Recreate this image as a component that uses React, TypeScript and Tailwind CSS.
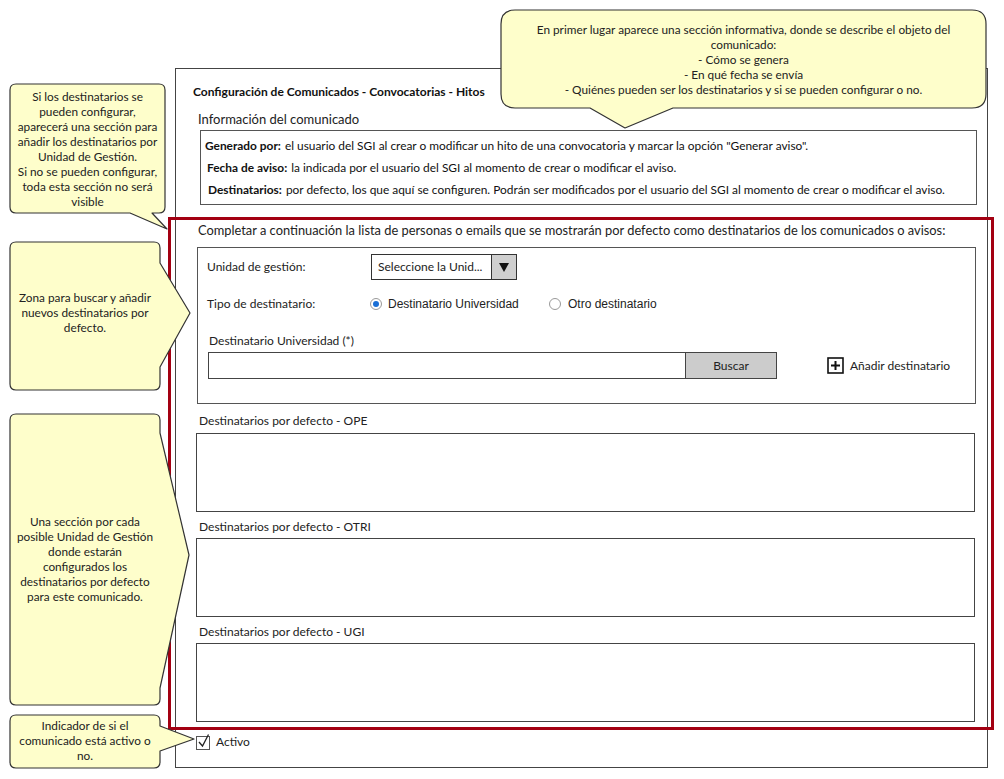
import React from 'react';

const FONT = { fontFamily: 'Lato, "Open Sans", sans-serif' };
const ARIAL = { fontFamily: '"Liberation Sans", Arial, sans-serif' };

function CalloutShapes() {
  return (
    <svg className="absolute inset-0 pointer-events-none" width="1004" height="779" viewBox="0 0 1004 779">
      <g fill="#fefecb" stroke="#333" strokeWidth="1.2" strokeLinejoin="round">
        <path d="M515,10 H972 Q986,10 986,24 V94 Q986,108 972,108 H673 L625,128 L590,108 H515 Q501,108 501,94 V24 Q501,10 515,10 Z" />
        <path d="M16,84 H159 Q165,84 165,90 V207 Q165,213 159,213 H152 L167,229 L130,213 H16 Q10,213 10,207 V90 Q10,84 16,84 Z" />
        <path d="M16,242 H154 Q160,242 160,248 V263 L190,313 L160,367 V384 Q160,390 154,390 H16 Q10,390 10,384 V248 Q10,242 16,242 Z" />
        <path d="M16,414 H154 Q160,414 160,420 V433 L189,555 L160,688 V699 Q160,705 154,705 H16 Q10,705 10,699 V420 Q10,414 16,414 Z" />
        <path d="M16,715 H154 Q160,715 160,721 V726 L194,739 L160,751 V762 Q160,768 154,768 H16 Q10,768 10,762 V721 Q10,715 16,715 Z" />
      </g>
    </svg>
  );
}

function CalloutText({ lines, className }: { lines: string[]; className: string }) {
  return (
    <div className={`absolute flex flex-col items-center text-[11.8px] leading-[15px] text-[#222] ${className}`} style={FONT}>
      {lines.map((l, i) => (
        <div key={i} className="whitespace-nowrap">{l}</div>
      ))}
    </div>
  );
}

function InfoRow({ label, value, pl }: { label: string; value: string; pl: string }) {
  return (
    <div className={`flex h-[22px] items-center whitespace-nowrap text-[11.9px] text-[#111] ${pl}`}>
      <span className="font-bold">{label}</span>
      <span className="ml-[4px]">{value}</span>
    </div>
  );
}

function Radio({ checked }: { checked?: boolean }) {
  return (
    <span className="flex h-[12px] w-[12px] items-center justify-center rounded-full border border-[#999] bg-white">
      {checked && <span className="h-[6px] w-[6px] rounded-full bg-[#1a6fd6]" />}
    </span>
  );
}

function DefaultList({ title }: { title: string }) {
  return (
    <>
      <div className="ml-[23px] mt-[7px] h-[16px] text-[12px] leading-[16px] text-[#222]">{title}</div>
      <div className="ml-[20px] mt-[3px] h-[79px] w-[779px] border border-[#444] bg-white" />
    </>
  );
}

export default function App() {
  return (
    <div className="relative h-[779px] w-[1004px] overflow-hidden bg-white" style={FONT}>
      <div className="absolute left-[175px] top-[68px] flex h-[700px] w-[813px] flex-col border border-[#444]">
        <div className="ml-[17px] mt-[16px] h-[14px] whitespace-nowrap text-[12px] font-bold leading-[14px] text-[#111]">
          Configuración de Comunicados - Convocatorias - Hitos
        </div>
        <div className="ml-[22px] mt-[12px] h-[16px] text-[13px] leading-[16px] text-[#222]">Información del comunicado</div>
        <div className="ml-[24px] mt-[3px] h-[75px] w-[777px] border border-[#555] pt-[4px]">
          <InfoRow pl="pl-[4px]" label="Generado por:" value={'el usuario del SGI al crear o  modificar un hito de una convocatoria y marcar la opción "Generar aviso".'} />
          <InfoRow pl="pl-[6px]" label="Fecha de aviso:" value="la indicada por el usuario del SGI al momento de crear o modificar el aviso." />
          <InfoRow pl="pl-[7px]" label="Destinatarios:" value="por defecto, los que aquí se configuren. Podrán ser modificados por el usuario del SGI al momento de crear o modificar el aviso." />
        </div>
        <div className="ml-[22px] mt-[17px] h-[16px] whitespace-nowrap text-[12.85px] leading-[16px] text-[#222]">
          Completar a continuación la lista de personas o emails que se mostrarán por defecto como destinatarios de los comunicados o avisos:
        </div>
        <div className="ml-[21px] mt-[9px] h-[157px] w-[779px] border border-[#555] text-[12px] text-[#222]">
          <div className="mt-[6px] flex h-[26px] items-center">
            <span className="ml-[9px] w-[164px]">Unidad de gestión:</span>
            <div className="flex h-[26px] w-[146px] items-stretch border border-[#333] bg-white">
              <span className="flex flex-1 items-center pl-[6px]">Seleccione la Unid...</span>
              <span className="flex w-[25px] items-center justify-center border-l border-[#333] bg-[#cfcfcf]">
                <svg width="10" height="9" viewBox="0 0 10 9"><path d="M0,0 H10 L5,9 Z" fill="#111" /></svg>
              </span>
            </div>
          </div>
          <div className="mt-[14px] flex h-[20px] items-center">
            <span className="ml-[9px] w-[163px]">Tipo de destinatario:</span>
            <Radio checked />
            <span className="ml-[6px] w-[161px]" style={ARIAL}>Destinatario Universidad</span>
            <Radio />
            <span className="ml-[7px]" style={ARIAL}>Otro destinatario</span>
          </div>
          <div className="ml-[11px] mt-[19px] h-[16px] leading-[16px]">Destinatario Universidad (*)</div>
          <div className="mt-[3px] flex h-[27px] items-center">
            <div className="ml-[10px] h-[27px] w-[478px] border border-[#444] bg-white" />
            <div className="-ml-px flex h-[27px] w-[92px] items-center justify-center border border-[#444] bg-[#cccccc]">Buscar</div>
            <svg className="ml-[50px]" width="17" height="17" viewBox="0 0 17 17">
              <rect x="1" y="1" width="15" height="15" fill="white" stroke="#111" strokeWidth="1.6" />
              <path d="M8.5,4 V13 M4,8.5 H13" stroke="#111" strokeWidth="2" />
            </svg>
            <span className="ml-[6px]">Añadir destinatario</span>
          </div>
        </div>
        <div className="ml-[23px] mt-[9px] h-[16px] text-[12px] leading-[16px] text-[#222]">Destinatarios por defecto - OPE</div>
        <div className="ml-[20px] mt-[4px] h-[79px] w-[779px] border border-[#444] bg-white" />
        <DefaultList title="Destinatarios por defecto - OTRI" />
        <DefaultList title="Destinatarios por defecto - UGI" />
        <div className="ml-[20px] mt-[12px] flex h-[16px] items-center text-[12px] text-[#222]">
          <svg width="16" height="17" viewBox="0 0 16 17" className="-mt-[2px]">
            <rect x="0.5" y="3.5" width="13" height="13" fill="white" stroke="#555" strokeWidth="1" />
            <path d="M3,9 L6.5,13 L12.5,1.5" fill="none" stroke="#222" strokeWidth="1.3" />
          </svg>
          <span className="ml-[4px]">Activo</span>
        </div>
      </div>

      <div className="pointer-events-none absolute left-[168px] top-[217px] h-[513px] w-[826px] border-[3px] border-[#a30012]" />

      <CalloutShapes />

      <CalloutText
        className="left-[501px] top-[22px] w-[485px]"
        lines={[
          'En primer lugar aparece una sección informativa, donde se describe el objeto del',
          'comunicado:',
          '- Cómo se genera',
          '- En qué fecha se envía',
          '- Quiénes pueden ser los destinatarios y si se pueden configurar o no.',
        ]}
      />
      <CalloutText
        className="left-[10px] top-[89px] w-[155px]"
        lines={[
          'Si los destinatarios se',
          'pueden configurar,',
          'aparecerá una sección para',
          'añadir los destinatarios por',
          'Unidad de Gestión.',
          'Si no se pueden configurar,',
          'toda esta sección no será',
          'visible',
        ]}
      />
      <CalloutText
        className="left-[10px] top-[290px] w-[150px]"
        lines={['Zona para buscar y añadir', 'nuevos destinatarios por', 'defecto.']}
      />
      <CalloutText
        className="left-[10px] top-[514px] w-[150px]"
        lines={[
          'Una sección por cada',
          'posible Unidad de Gestión',
          'donde estarán',
          'configurados los',
          'destinatarios por defecto',
          'para este comunicado.',
        ]}
      />
      <CalloutText
        className="left-[10px] top-[718px] w-[150px]"
        lines={['Indicador de si el', 'comunicado está activo o', 'no.']}
      />
    </div>
  );
}
